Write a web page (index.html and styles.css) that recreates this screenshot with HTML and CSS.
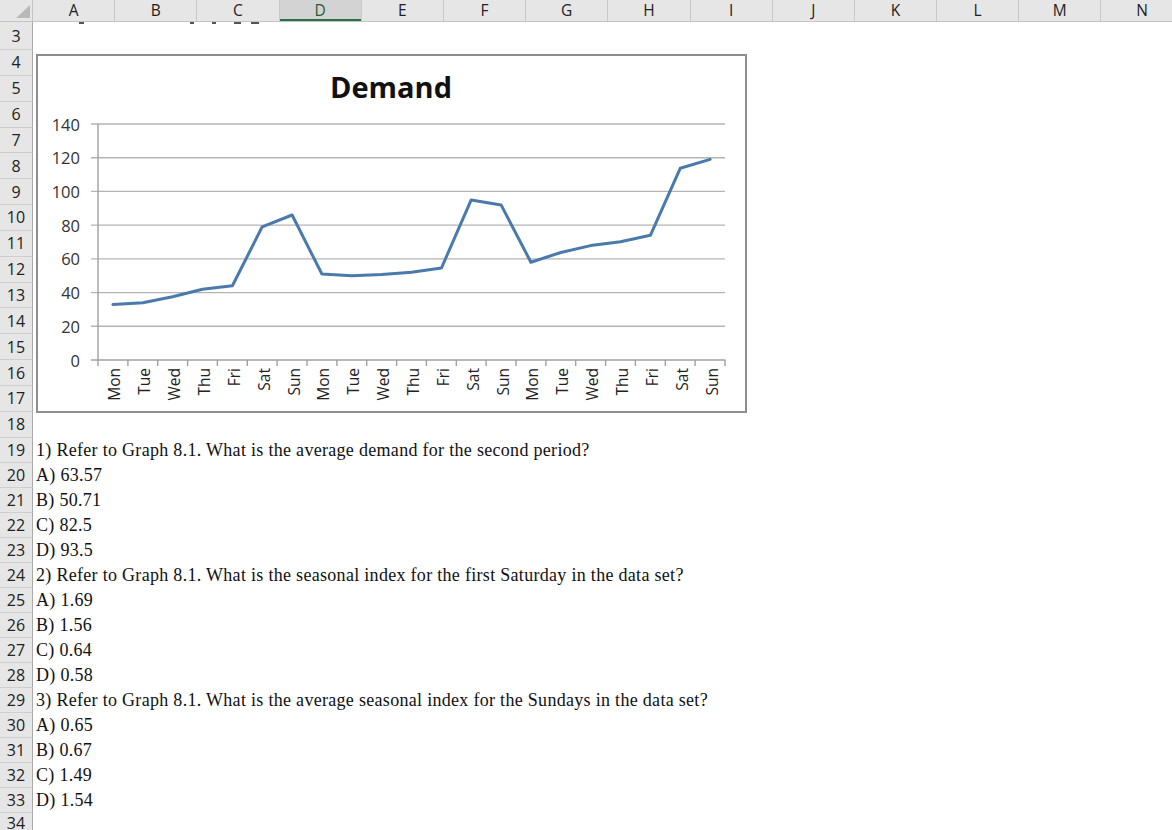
FILE: index.html
```html
<!DOCTYPE html>
<html>
<head>
<meta charset="utf-8">
<link rel="stylesheet" href="styles.css">
</head>
<body>
<div class="sheet">
  <div class="colhead">
    <div class="corner"><svg width="33" height="22" viewBox="0 0 33 22"><polygon points="30,5 30,18 16,18" fill="#b8b8b8"/></svg></div>
    <div class="ch">A</div><div class="ch">B</div><div class="ch">C</div><div class="ch sel">D</div><div class="ch">E</div><div class="ch">F</div><div class="ch">G</div><div class="ch">H</div><div class="ch">I</div><div class="ch">J</div><div class="ch">K</div><div class="ch">L</div><div class="ch">M</div><div class="ch">N</div>
  </div>
  <div class="row r3"><div class="rh">3</div><div class="cells"><div class="frags"><i class="f1"></i><i class="f2"></i><i class="f3"></i><i class="f4"></i><i class="f5"></i></div></div></div>
  <div class="row tall"><div class="rh">4</div><div class="cells"></div></div>
  <div class="row tall"><div class="rh">5</div><div class="cells"></div></div>
  <div class="row tall"><div class="rh">6</div><div class="cells"></div></div>
  <div class="row tall"><div class="rh">7</div><div class="cells"></div></div>
  <div class="row tall"><div class="rh">8</div><div class="cells"></div></div>
  <div class="row tall"><div class="rh">9</div><div class="cells"></div></div>
  <div class="row tall"><div class="rh">10</div><div class="cells"></div></div>
  <div class="row tall"><div class="rh">11</div><div class="cells"></div></div>
  <div class="row tall"><div class="rh">12</div><div class="cells"></div></div>
  <div class="row tall"><div class="rh">13</div><div class="cells"></div></div>
  <div class="row tall"><div class="rh">14</div><div class="cells"></div></div>
  <div class="row tall"><div class="rh">15</div><div class="cells"></div></div>
  <div class="row tall"><div class="rh">16</div><div class="cells"></div></div>
  <div class="row tall"><div class="rh">17</div><div class="cells"></div></div>
  <div class="row tall"><div class="rh">18</div><div class="cells"></div></div>
  <div class="row"><div class="rh">19</div><div class="cells"><span class="txt">1) Refer to Graph 8.1. What is the average demand for the second period?</span></div></div>
  <div class="row"><div class="rh">20</div><div class="cells"><span class="txt">A) 63.57</span></div></div>
  <div class="row"><div class="rh">21</div><div class="cells"><span class="txt">B) 50.71</span></div></div>
  <div class="row"><div class="rh">22</div><div class="cells"><span class="txt">C) 82.5</span></div></div>
  <div class="row"><div class="rh">23</div><div class="cells"><span class="txt">D) 93.5</span></div></div>
  <div class="row"><div class="rh">24</div><div class="cells"><span class="txt">2) Refer to Graph 8.1. What is the seasonal index for the first Saturday in the data set?</span></div></div>
  <div class="row"><div class="rh">25</div><div class="cells"><span class="txt">A) 1.69</span></div></div>
  <div class="row"><div class="rh">26</div><div class="cells"><span class="txt">B) 1.56</span></div></div>
  <div class="row"><div class="rh">27</div><div class="cells"><span class="txt">C) 0.64</span></div></div>
  <div class="row"><div class="rh">28</div><div class="cells"><span class="txt">D) 0.58</span></div></div>
  <div class="row"><div class="rh">29</div><div class="cells"><span class="txt">3) Refer to Graph 8.1. What is the average seasonal index for the Sundays in the data set?</span></div></div>
  <div class="row"><div class="rh">30</div><div class="cells"><span class="txt">A) 0.65</span></div></div>
  <div class="row"><div class="rh">31</div><div class="cells"><span class="txt">B) 0.67</span></div></div>
  <div class="row"><div class="rh">32</div><div class="cells"><span class="txt">C) 1.49</span></div></div>
  <div class="row"><div class="rh">33</div><div class="cells"><span class="txt">D) 1.54</span></div></div>
  <div class="row last"><div class="rh">34</div><div class="cells"></div></div>

  <div class="chart">
    <svg width="711" height="359" viewBox="36 54 711 359">
      <rect x="37" y="55" width="709" height="357" fill="#fff" stroke="#8e8e8e" stroke-width="2"/>
      <text class="title" x="391" y="86">Demand</text>
      <g stroke="#b4b4b4" stroke-width="1.4">
        <line x1="91" y1="124" x2="725" y2="124"/>
        <line x1="91" y1="157.7" x2="725" y2="157.7"/>
        <line x1="91" y1="191.4" x2="725" y2="191.4"/>
        <line x1="91" y1="225.1" x2="725" y2="225.1"/>
        <line x1="91" y1="258.9" x2="725" y2="258.9"/>
        <line x1="91" y1="292.6" x2="725" y2="292.6"/>
        <line x1="91" y1="326.3" x2="725" y2="326.3"/>
      </g>
      <g stroke="#a0a0a0" stroke-width="1.4">
        <line x1="98" y1="124" x2="98" y2="366"/>
        <line x1="91" y1="360" x2="725.5" y2="360"/>
        <line x1="127.9" y1="360" x2="127.9" y2="366"/>
        <line x1="157.7" y1="360" x2="157.7" y2="366"/>
        <line x1="187.6" y1="360" x2="187.6" y2="366"/>
        <line x1="217.4" y1="360" x2="217.4" y2="366"/>
        <line x1="247.3" y1="360" x2="247.3" y2="366"/>
        <line x1="277.1" y1="360" x2="277.1" y2="366"/>
        <line x1="307" y1="360" x2="307" y2="366"/>
        <line x1="336.9" y1="360" x2="336.9" y2="366"/>
        <line x1="366.7" y1="360" x2="366.7" y2="366"/>
        <line x1="396.6" y1="360" x2="396.6" y2="366"/>
        <line x1="426.4" y1="360" x2="426.4" y2="366"/>
        <line x1="456.3" y1="360" x2="456.3" y2="366"/>
        <line x1="486.1" y1="360" x2="486.1" y2="366"/>
        <line x1="516" y1="360" x2="516" y2="366"/>
        <line x1="545.9" y1="360" x2="545.9" y2="366"/>
        <line x1="575.7" y1="360" x2="575.7" y2="366"/>
        <line x1="605.6" y1="360" x2="605.6" y2="366"/>
        <line x1="635.4" y1="360" x2="635.4" y2="366"/>
        <line x1="665.3" y1="360" x2="665.3" y2="366"/>
        <line x1="695.1" y1="360" x2="695.1" y2="366"/>
        <line x1="725" y1="360" x2="725" y2="366"/>
      </g>
      <g class="ylab">
        <text x="80" y="124">140</text>
        <text x="80" y="157.7">120</text>
        <text x="80" y="191.4">100</text>
        <text x="80" y="225.1">80</text>
        <text x="80" y="258.9">60</text>
        <text x="80" y="292.6">40</text>
        <text x="80" y="326.3">20</text>
        <text x="80" y="360">0</text>
      </g>
      <polyline fill="none" stroke="#4a7aab" stroke-width="3" stroke-linejoin="round" stroke-linecap="round"
        points="112.9,304.4 142.8,302.7 172.6,296.8 202.5,289.2 232.4,285.8 262.2,226.8 292.1,215 321.9,274 351.8,275.7 381.6,274.5 411.5,272.3 441.4,268.1 471.2,199.9 501.1,204.9 530.9,262.2 560.8,252.5 590.6,245.6 620.5,241.7 650.4,235.3 680.2,168.3 710.1,159.4"/>
      <g class="xlab">
        <text transform="translate(114.4,368) rotate(-90)">Mon</text>
        <text transform="translate(144.3,368) rotate(-90)">Tue</text>
        <text transform="translate(174.1,368) rotate(-90)">Wed</text>
        <text transform="translate(204,368) rotate(-90)">Thu</text>
        <text transform="translate(233.9,368) rotate(-90)">Fri</text>
        <text transform="translate(263.7,368) rotate(-90)">Sat</text>
        <text transform="translate(293.6,368) rotate(-90)">Sun</text>
        <text transform="translate(323.4,368) rotate(-90)">Mon</text>
        <text transform="translate(353.3,368) rotate(-90)">Tue</text>
        <text transform="translate(383.1,368) rotate(-90)">Wed</text>
        <text transform="translate(413,368) rotate(-90)">Thu</text>
        <text transform="translate(442.9,368) rotate(-90)">Fri</text>
        <text transform="translate(472.7,368) rotate(-90)">Sat</text>
        <text transform="translate(502.6,368) rotate(-90)">Sun</text>
        <text transform="translate(532.4,368) rotate(-90)">Mon</text>
        <text transform="translate(562.3,368) rotate(-90)">Tue</text>
        <text transform="translate(592.1,368) rotate(-90)">Wed</text>
        <text transform="translate(622,368) rotate(-90)">Thu</text>
        <text transform="translate(651.9,368) rotate(-90)">Fri</text>
        <text transform="translate(681.7,368) rotate(-90)">Sat</text>
        <text transform="translate(711.6,368) rotate(-90)">Sun</text>
      </g>
    </svg>
  </div>
</div>
</body>
</html>
```
FILE: styles.css
```css
* { box-sizing: border-box; }
html, body { margin: 0; padding: 0; background: #fff; overflow: hidden; }
body { width: 1172px; height: 830px; }
.sheet { position: relative; width: 1172px; height: 830px; overflow: hidden; }

.colhead { display: flex; height: 22px; background: #e6e6e6; border-bottom: 1px solid #c4c4c4; }
.corner { width: 33px; flex: none; border-right: 1px solid #c4c4c4; }
.corner svg { display: block; }
.ch { width: 82.2px; flex: none; border-right: 1px solid #c9c9c9; font-family: "Open Sans", sans-serif; font-size: 15.5px; color: #222; display: flex; align-items: center; justify-content: center; line-height: 1; }
.ch.sel { background: #d3d3d3; box-shadow: inset 0 -2px 0 #217346; color: #1e5e3a; }

.row { display: flex; height: 25px; }
.row.r3 { height: 28px; }
.row.tall { height: 25.85px; }
.row.last { height: 18px; }
.rh { width: 33px; flex: none; background: #e6e6e6; border-right: 1px solid #a9a9a9; border-bottom: 1px solid #cfcfcf; font-family: "Open Sans", sans-serif; font-size: 16px; color: #222; display: flex; align-items: center; justify-content: center; }
.row.last .rh { align-items: flex-end; border-bottom: none; line-height: 16px; }
.cells { flex: 1; display: flex; align-items: center; min-width: 0; }
.txt { font-family: "Liberation Serif", serif; font-size: 18px; letter-spacing: 0.3px; color: #111; white-space: nowrap; padding-left: 3px; line-height: 25px; }

.frags { align-self: flex-start; display: flex; height: 3px; }
.frags i { display: block; height: 2px; background: #555; }
.f1 { width: 5px; margin-left: 46px; }
.f2 { width: 4px; margin-left: 106px; }
.f3 { width: 4px; margin-left: 18px; }
.f4 { width: 7px; margin-left: 18px; }
.f5 { width: 8px; margin-left: 10px; }

.chart { position: absolute; left: 36px; top: 54px; width: 711px; height: 359px; }
.chart svg { display: block; }
.title { font-family: "Open Sans", sans-serif; font-weight: 700; font-size: 29px; fill: #111; text-anchor: middle; dominant-baseline: central; }
.ylab text { font-family: "Open Sans", sans-serif; font-size: 16.5px; fill: #333; text-anchor: end; dominant-baseline: central; }
.xlab text { font-family: "Open Sans", sans-serif; font-size: 15.5px; fill: #222; text-anchor: end; dominant-baseline: central; }
```
